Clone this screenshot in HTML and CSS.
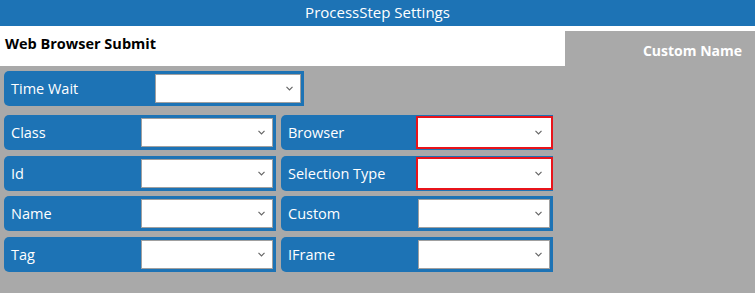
FILE: index.html
```html
<!DOCTYPE html>
<html>
<head>
<meta charset="utf-8">
<link rel="stylesheet" href="styles.css">
</head>
<body>
<div class="header">ProcessStep Settings</div>
<div class="main">
  <div class="left">
    <div class="titlebar">Web Browser Submit</div>
    <div class="fields">
      <div class="row-top">
        <div class="field wide">
          <span class="label">Time Wait</span>
          <div class="select"><svg class="chev" viewBox="0 0 7 5" width="7" height="5"><path d="M0.5 0.8 L3.5 3.8 L6.5 0.8" fill="none" stroke="#666" stroke-width="1.2"/></svg></div>
        </div>
      </div>
      <div class="grid">
        <div class="field"><span class="label">Class</span><div class="select"><svg class="chev" viewBox="0 0 7 5" width="7" height="5"><path d="M0.5 0.8 L3.5 3.8 L6.5 0.8" fill="none" stroke="#666" stroke-width="1.2"/></svg></div></div>
        <div class="field"><span class="label">Browser</span><div class="select invalid"><svg class="chev" viewBox="0 0 7 5" width="7" height="5"><path d="M0.5 0.8 L3.5 3.8 L6.5 0.8" fill="none" stroke="#666" stroke-width="1.2"/></svg></div></div>
        <div class="field"><span class="label">Id</span><div class="select"><svg class="chev" viewBox="0 0 7 5" width="7" height="5"><path d="M0.5 0.8 L3.5 3.8 L6.5 0.8" fill="none" stroke="#666" stroke-width="1.2"/></svg></div></div>
        <div class="field"><span class="label">Selection Type</span><div class="select invalid"><svg class="chev" viewBox="0 0 7 5" width="7" height="5"><path d="M0.5 0.8 L3.5 3.8 L6.5 0.8" fill="none" stroke="#666" stroke-width="1.2"/></svg></div></div>
        <div class="field"><span class="label">Name</span><div class="select"><svg class="chev" viewBox="0 0 7 5" width="7" height="5"><path d="M0.5 0.8 L3.5 3.8 L6.5 0.8" fill="none" stroke="#666" stroke-width="1.2"/></svg></div></div>
        <div class="field"><span class="label">Custom</span><div class="select"><svg class="chev" viewBox="0 0 7 5" width="7" height="5"><path d="M0.5 0.8 L3.5 3.8 L6.5 0.8" fill="none" stroke="#666" stroke-width="1.2"/></svg></div></div>
        <div class="field"><span class="label">Tag</span><div class="select"><svg class="chev" viewBox="0 0 7 5" width="7" height="5"><path d="M0.5 0.8 L3.5 3.8 L6.5 0.8" fill="none" stroke="#666" stroke-width="1.2"/></svg></div></div>
        <div class="field"><span class="label">IFrame</span><div class="select"><svg class="chev" viewBox="0 0 7 5" width="7" height="5"><path d="M0.5 0.8 L3.5 3.8 L6.5 0.8" fill="none" stroke="#666" stroke-width="1.2"/></svg></div></div>
      </div>
    </div>
  </div>
  <div class="right">
    <div class="custom-name">Custom Name</div>
  </div>
</div>
</body>
</html>
```
FILE: styles.css
```css
html, body {
  margin: 0;
  padding: 0;
  height: 100%;
}
body {
  background: #a9a9a9;
  font-family: "Open Sans", "Noto Sans", sans-serif;
  display: flex;
  flex-direction: column;
  overflow: hidden;
}
.header {
  height: 26px;
  background: #1d73b5;
  color: #fff;
  font-size: 15px;
  line-height: 25px;
  text-align: center;
  flex: none;
}
.main {
  flex: 1;
  display: flex;
  background: #fff;
}
.left {
  width: 565px;
  display: flex;
  flex-direction: column;
}
.titlebar {
  height: 40px;
  background: #fff;
  color: #000;
  font-weight: bold;
  font-size: 14.5px;
  padding-left: 5px;
  line-height: 36px;
  box-sizing: border-box;
}
.fields {
  flex: 1;
  background: #a9a9a9;
  padding: 5px 0 0 4px;
}
.row-top {
  display: flex;
  margin-bottom: 9px;
}
.grid {
  display: grid;
  grid-template-columns: 272px 272px;
  column-gap: 5px;
  row-gap: 5.67px;
}
.field {
  height: 35px;
  background: #1d73b5;
  border-radius: 5px 0 0 5px;
  display: flex;
  align-items: center;
  justify-content: space-between;
  padding: 3px 3px 3px 7px;
  box-sizing: border-box;
}
.field.wide {
  width: 300px;
}
.label {
  color: #fff;
  font-size: 14.5px;
}
.select {
  width: 132px;
  height: 29px;
  background: #fff;
  border: 1px solid #a0a0a0;
  box-sizing: border-box;
  display: flex;
  align-items: center;
  justify-content: flex-end;
  padding-right: 7px;
}
.field.wide .select {
  width: 146px;
}
.select.invalid {
  width: 137px;
  height: 33px;
  margin: -2px -3px -2px 0;
  border: 2px solid #e8141b;
  padding-right: 9px;
}
.chev {
  display: block;
}
.right {
  flex: 1;
  margin-top: 5px;
  background: #a9a9a9;
}
.custom-name {
  color: #fff;
  font-weight: bold;
  font-size: 14px;
  text-align: right;
  padding-right: 13px;
  padding-top: 10px;
}
```
